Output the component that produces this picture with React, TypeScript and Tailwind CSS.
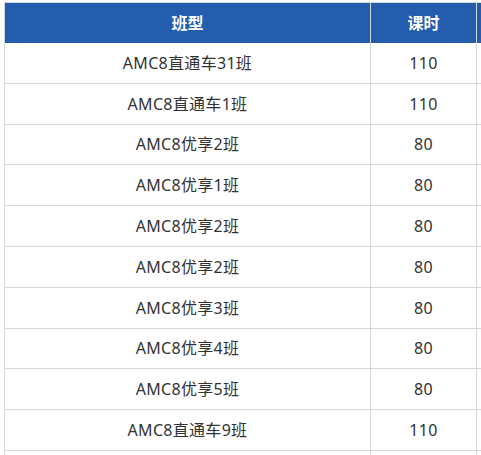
import React from "react";

const rows: [string, string][] = [
  ["AMC8直通车31班", "110"],
  ["AMC8直通车1班", "110"],
  ["AMC8优享2班", "80"],
  ["AMC8优享1班", "80"],
  ["AMC8优享2班", "80"],
  ["AMC8优享2班", "80"],
  ["AMC8优享3班", "80"],
  ["AMC8优享4班", "80"],
  ["AMC8优享5班", "80"],
  ["AMC8直通车9班", "110"],
];

export default function App() {
  return (
    <div
      className="w-[481px] h-[455px] overflow-hidden bg-white pt-[2px] pl-[4px]"
      style={{ fontFamily: '"Noto Sans", "Noto Sans CJK SC", sans-serif' }}
    >
      <div className="w-[640px] border-l border-t border-[#d8d8d8]">
        <div className="flex h-[40px] bg-[#245dae] text-white font-bold text-[16px]">
          <div className="w-[366px] shrink-0 border-r border-[#d8d8d8] flex items-center justify-center">班型</div>
          <div className="w-[106px] shrink-0 border-r border-[#d8d8d8] flex items-center justify-center">课时</div>
          <div className="flex-1"></div>
        </div>
        {rows.map(([name, hours], i) => (
          <div key={i} className="flex h-[40.8px] text-[16px] text-[#333333] tracking-[0.3px]">
            <div className="w-[366px] shrink-0 border-r border-b border-[#d8d8d8] flex items-center justify-center">{name}</div>
            <div className="w-[106px] shrink-0 border-r border-b border-[#d8d8d8] flex items-center justify-center">{hours}</div>
            <div className="flex-1 border-b border-[#d8d8d8]"></div>
          </div>
        ))}
        <div className="flex h-[40.8px]">
          <div className="w-[366px] shrink-0 border-r border-[#d8d8d8]"></div>
          <div className="w-[106px] shrink-0 border-r border-[#d8d8d8]"></div>
          <div className="flex-1"></div>
        </div>
      </div>
    </div>
  );
}
